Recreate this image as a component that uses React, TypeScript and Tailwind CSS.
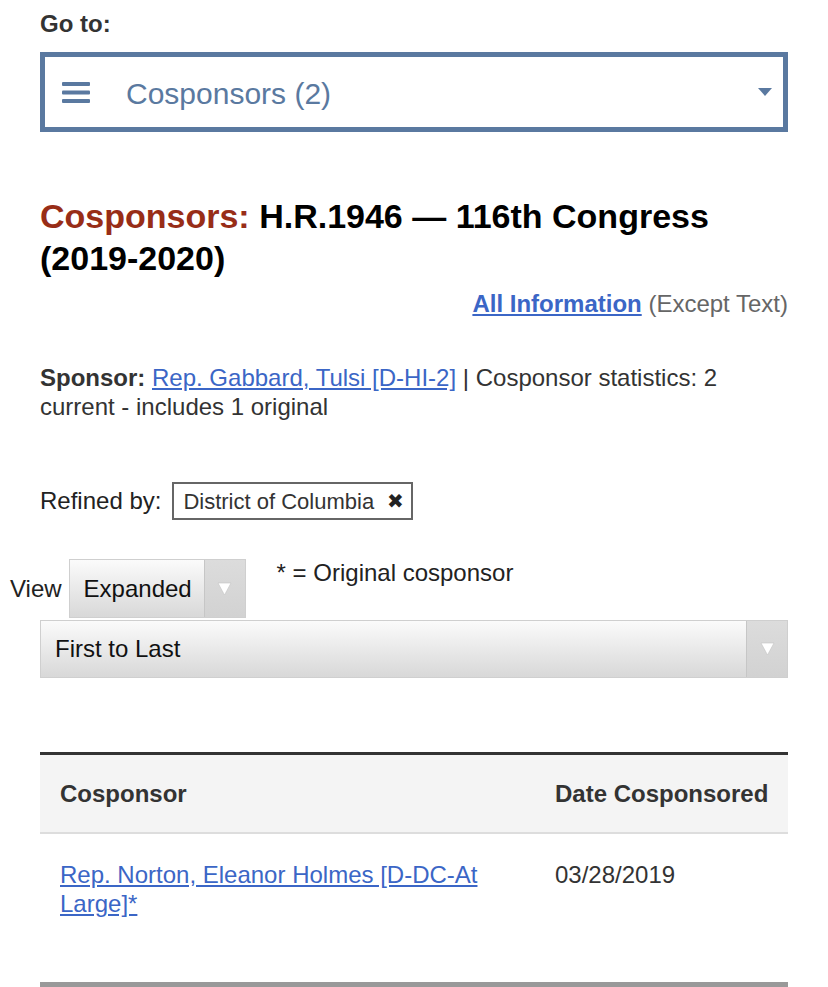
import React from "react";

function Caret() {
  return (
    <svg width="14" height="8" viewBox="0 0 14 8">
      <polygon points="0,0 14,0 7,8" fill="#5a79a0" />
    </svg>
  );
}

function WhiteArrow() {
  return (
    <svg width="15" height="14" viewBox="0 0 15 14">
      <polygon points="1,1 14,1 7.5,13" fill="#fff" stroke="#c4c4c4" strokeWidth="0.6" />
    </svg>
  );
}

function Select({ label, className }: { label: string; className: string }) {
  return (
    <div className={`flex border border-[#cfcfcf] bg-linear-to-b from-[#fbfbfb] to-[#d8d8d8] ${className}`}>
      <div className="flex-1 flex items-center pl-[14px] text-[24px] text-[#111]">{label}</div>
      <div className="w-[41px] flex items-center justify-center border-l border-[#c6c6c6] bg-linear-to-b from-[#dcdcdc] to-[#d2d2d2]">
        <WhiteArrow />
      </div>
    </div>
  );
}

export default function App() {
  return (
    <div className="min-h-[987px] bg-white px-[40px] pt-[10px] font-['Liberation_Sans',Arial,sans-serif] text-[#333] overflow-hidden">
      <div className="text-[24px] leading-[28px] font-bold text-[#333]">Go to:</div>

      <div className="mt-[14px] h-[80px] border-[5px] border-[#5a79a0] flex items-center pl-[17px] pr-[11px]">
        <svg width="28" height="21" viewBox="0 0 28 21">
          <rect x="0" y="0" width="28" height="4" rx="1" fill="#5a79a0" />
          <rect x="0" y="8.5" width="28" height="4" rx="1" fill="#5a79a0" />
          <rect x="0" y="17" width="28" height="4" rx="1" fill="#5a79a0" />
        </svg>
        <span className="ml-[36px] mt-[3px] text-[30px] text-[#5a79a0] flex-1">Cosponsors (2)</span>
        <Caret />
      </div>

      <h1 className="mt-[63px] text-[34px] leading-[42px] font-bold text-black">
        <span className="text-[#982d17]">Cosponsors:</span> H.R.1946 — 116th Congress (2019-2020)
      </h1>

      <div className="mt-[11px] text-right text-[24px] leading-[28px] text-[#666]">
        <a href="#" className="font-bold text-[#3b66c6] underline">All Information</a> (Except Text)
      </div>

      <p className="mt-[45px] text-[24px] leading-[29px] text-[#333]">
        <b>Sponsor:</b>{" "}
        <a href="#" className="text-[#3b66c6] underline">Rep. Gabbard, Tulsi [D-HI-2]</a> | Cosponsor statistics: 2 current - includes 1 original
      </p>

      <div className="mt-[61px] flex items-center gap-[11px] text-[24px]">
        <span className="text-[#222]">Refined by:</span>
        <div className="h-[38px] flex items-center border-2 border-[#666] pl-[9px] pr-[7px] text-[22px] text-[#333]">
          District of Columbia
          <span className="ml-[13px] text-[20px] text-[#222]">✖</span>
        </div>
      </div>

      <div className="mt-[39px] -ml-[30px] flex items-start">
        <div className="flex items-center gap-[7px]">
          <span className="text-[24px] text-[#222]">View</span>
          <Select label="Expanded" className="w-[177px] h-[59px]" />
        </div>
        <span className="ml-[31px] text-[24px] leading-[28px] text-[#222]">* = Original cosponsor</span>
      </div>

      <Select label="First to Last" className="mt-[2px] w-full h-[58px]" />

      <div className="mt-[74px] border-t-[3px] border-[#333]">
        <div className="flex h-[79px] items-center bg-[#f4f4f4] border-b-2 border-[#dddddd] text-[24px] font-bold text-[#333]">
          <div className="w-[495px] pl-[20px]">Cosponsor</div>
          <div className="flex-1 pl-[20px]">Date Cosponsored</div>
        </div>
        <div className="flex pt-[26px] pb-[64px] text-[24px] leading-[29px] border-b-[6px] border-[#999]">
          <div className="w-[495px] pl-[20px] pr-[20px]">
            <a href="#" className="text-[#3b66c6] underline">Rep. Norton, Eleanor Holmes [D-DC-At Large]*</a>
          </div>
          <div className="flex-1 pl-[20px] text-[#333]">03/28/2019</div>
        </div>
      </div>
    </div>
  );
}
